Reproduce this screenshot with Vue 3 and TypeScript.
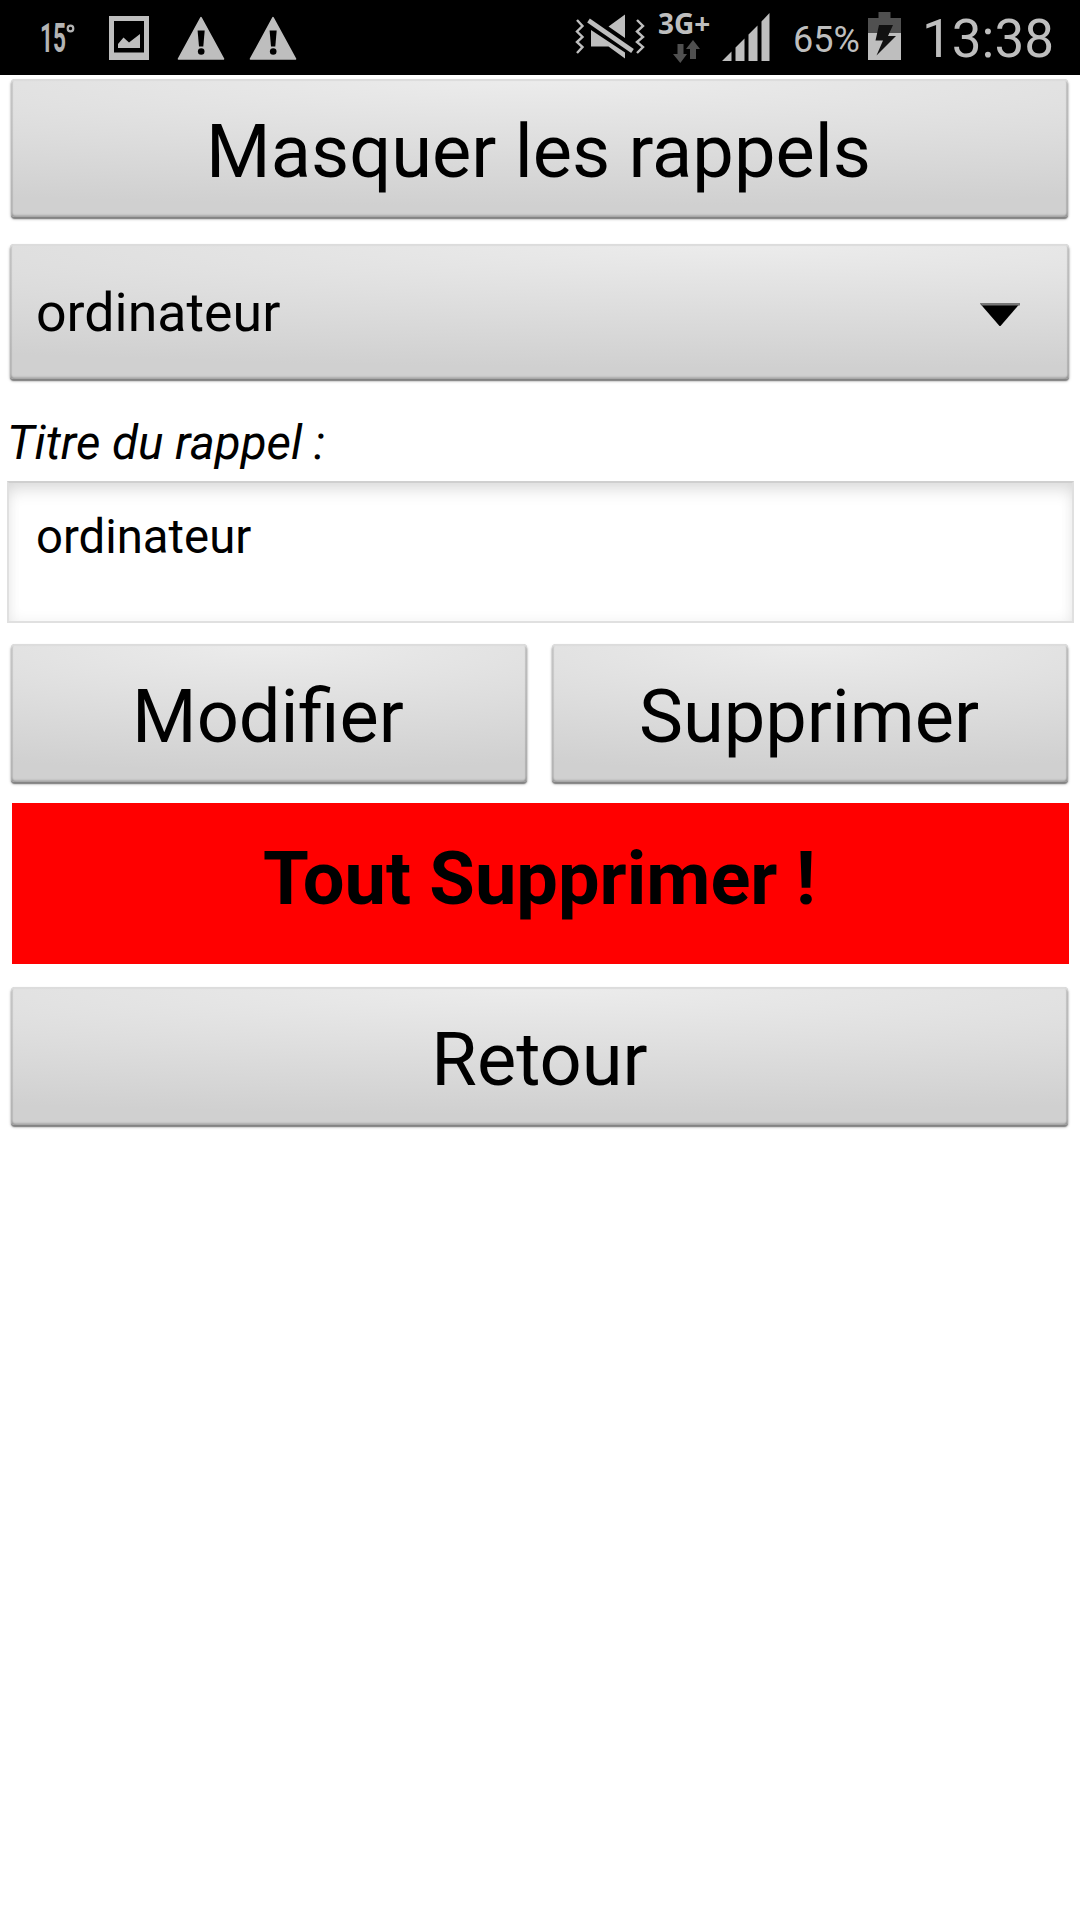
<script setup lang="ts">
import { ref } from 'vue'

const reminders = ref<string[]>(['ordinateur'])
const selected = ref<string>(reminders.value[0])
const title = ref<string>(selected.value)
const warnings: number[] = [1, 2]
</script>

<template>
  <div class="screen">
    <header class="status">
      <div class="left">
        <svg class="temp" width="36" height="46" viewBox="0 -6 36 46">
          <text x="0" y="30" textLength="26" lengthAdjust="spacingAndGlyphs">15</text>
          <circle cx="30.500" cy="6.500" r="2.800" fill="none" stroke="#b4b4b4" stroke-width="2.200" />
        </svg>
        <svg class="photo" width="40" height="44" viewBox="0 0 40 44">
          <path d="M0 0H40V44H0ZM5 5V36.500H35V5Z" fill-rule="evenodd" fill="#bebebe" />
          <path d="M9 32V28L14.500 21.500L20 26.500L31 18V32Z" fill="#bebebe" />
        </svg>
        <svg v-for="w in warnings" :key="w" class="warn" width="48" height="44" viewBox="0 0 48 44">
          <path d="M24 1.600L46.500 43H1.500Z" fill="#bebebe" stroke="#bebebe" stroke-width="1.600" stroke-linejoin="round" />
          <path d="M20.600 14.500H27.700L26.300 30.500H22Z" fill="#000" />
          <circle cx="24.200" cy="35.500" r="3.300" fill="#000" />
        </svg>
      </div>
      <div class="right">
        <svg width="70" height="46" viewBox="0 0 70 46" fill="none" stroke="#bebebe">
          <path d="M2 6L7.500 12L2 17.500L7.500 23L2 28L7.500 33L2 39" stroke-width="2.400" />
          <path d="M62 6L68 12L62 17.500L68 23L62 28L68 33L62 39" stroke-width="2.400" />
          <path d="M13.500 6.500L57.500 37" stroke-width="4.600" />
          <path d="M50 0.500V24L33.500 12.500ZM16 16L50 38.500V44.500L33.500 32.500H16Z" fill="#bebebe" stroke="none" />
        </svg>
        <div class="network">
          <span class="net-label">3G+</span>
          <svg width="27" height="23" viewBox="0 0 27 23" fill="#505050">
            <path d="M4.500 4H10.500V14H14L7.300 23L0 14H4.500Z" />
            <path d="M17 19V9H13L20 0L27 9H23V19Z" />
          </svg>
        </div>
        <svg class="signal" width="48" height="48" viewBox="0 0 48 48" fill="#bebebe">
          <path d="M0 48L9.500 38.500V48ZM13.500 48V34.500L22.500 25.500V48ZM26.500 48V21.500L35.500 12.500V48ZM39.500 48V8.500L47.500 0V48Z" />
        </svg>
        <span class="percent">65%</span>
        <svg class="battery" width="33" height="48" viewBox="0 0 33 48">
          <path d="M10.500 0H22.500V6H33V21H0V6H10.500Z" fill="#505050" />
          <path d="M0 21H33V48H0Z" fill="#bebebe" />
          <path d="M11 13H25L20 24H28L8.500 43.500L15 28.500H7.500Z" fill="#111" />
        </svg>
        <span class="clock">13:38</span>
      </div>
    </header>

    <main class="content">
      <button class="btn hide">Masquer les rappels</button>
      <div class="spinner" role="listbox">
        <span>{{ selected }}</span>
        <svg width="40" height="24" viewBox="0 0 40 24">
          <path d="M0 .5H40L20.500 23H19.500Z" fill="#000" />
          <path d="M0 0H40V2.500H2Z" fill="#777" />
        </svg>
      </div>
      <label class="label" for="title">Titre du rappel :</label>
      <input id="title" v-model="title" class="field" type="text" />
      <div class="row">
        <button class="btn">Modifier</button>
        <button class="btn">Supprimer</button>
      </div>
      <button class="danger">Tout Supprimer !</button>
      <button class="btn back">Retour</button>
    </main>
  </div>
</template>

<style>
body {
  background: #fff;
}
</style>

<style scoped>
.screen {
  width: 1080px;
  height: 1920px;
  overflow: hidden;
  background: #fff;
  color: #000;
  font-family: Roboto, sans-serif;
}
.screen * {
  box-sizing: border-box;
}
svg {
  display: block;
  flex: none;
}
.status {
  height: 75px;
  background: #000;
  color: #bebebe;
  display: flex;
  justify-content: space-between;
}
.left {
  display: flex;
  align-items: flex-start;
  padding-left: 40px;
}
.temp {
  margin-top: 16px;
  overflow: visible;
}
.temp text {
  font: 700 40px Roboto, sans-serif;
  fill: #b4b4b4;
}
.photo {
  margin: 16px 28px 0 33px;
}
.warn {
  margin-top: 16px;
}
.warn + .warn {
  margin-left: 24px;
}
.right {
  display: flex;
  align-items: flex-start;
  padding-right: 26px;
}
.right > svg:first-child {
  margin-top: 14px;
}
.network {
  width: 54px;
  margin-left: 13px;
  display: flex;
  flex-direction: column;
  align-items: flex-start;
}
.net-label {
  font: 700 28px/28px "Open Sans", sans-serif;
  height: 28px;
  margin-top: 9px;
}
.network svg {
  margin: 3px 0 0 15px;
}
.signal {
  margin: 13px 0 0 10px;
}
.percent {
  width: 66px;
  margin-left: 23px;
  font-size: 36px;
  line-height: 80px;
  white-space: nowrap;
}
.battery {
  margin: 12px 0 0 9px;
}
.clock {
  width: 132px;
  margin-left: 21px;
  font-size: 53px;
  line-height: 79px;
  white-space: nowrap;
}
.content {
  display: flex;
  flex-direction: column;
  padding-top: 4px;
}
button {
  border: 0;
  padding: 0;
  font-family: inherit;
  color: #000;
}
.btn,
.spinner {
  border-radius: 4px;
  background: radial-gradient(ellipse 150% 100% at 50% 0, #ececec, #d0d0d0 92%);
  box-shadow:
    inset 0 2px 1px #dcdcdc,
    inset 2px 0 1px rgba(0, 0, 0, 0.1),
    inset -2px 0 1px rgba(0, 0, 0, 0.14),
    inset 0 -2px 2px rgba(0, 0, 0, 0.18),
    0 2px 1px #838383,
    0 2px 3px rgba(0, 0, 0, 0.35);
}
.spinner {
  background: radial-gradient(ellipse 165% 100% at 70% 0, #ececec, #d0d0d0 92%);
}
.btn {
  height: 138px;
  font-size: 74px;
  line-height: 138px;
  padding: 7px 2px 0 0;
  display: flex;
  align-items: center;
  justify-content: center;
}
.hide,
.back {
  margin: 0 12px 0 11px;
}
.spinner {
  height: 135px;
  margin: 27px 11px 0 10px;
  padding: 2px 49px 0 26px;
  display: flex;
  align-items: center;
  justify-content: space-between;
  font-size: 53.700px;
}
.spinner svg {
  margin-top: 5px;
}
.label {
  margin: 36px 0 0 7px;
  height: 66px;
  font-size: 47.500px;
  line-height: 57px;
  font-style: italic;
}
.field {
  height: 142px;
  margin: 0 6px 0 7px;
  padding: 0 27px 31px;
  border: 2px solid #e0e0e0;
  border-top-color: #cfcfcf;
  background: #fff;
  box-shadow:
    inset 0 12px 16px -4px rgba(0, 0, 0, 0.11),
    inset 0 0 14px rgba(0, 0, 0, 0.06);
  font: 47.300px Roboto, sans-serif;
  color: #000;
  outline: 0;
}
.row {
  display: flex;
  gap: 25px;
  margin: 21px 12px 0 11px;
}
.row .btn {
  flex: 1;
}
.danger {
  height: 161px;
  margin: 21px 11px 0 12px;
  padding: 0 2px 10px 0;
  background: #f00;
  font-size: 74px;
  font-weight: 700;
}
.back {
  margin-top: 23px;
  padding-right: 0;
}
</style>
